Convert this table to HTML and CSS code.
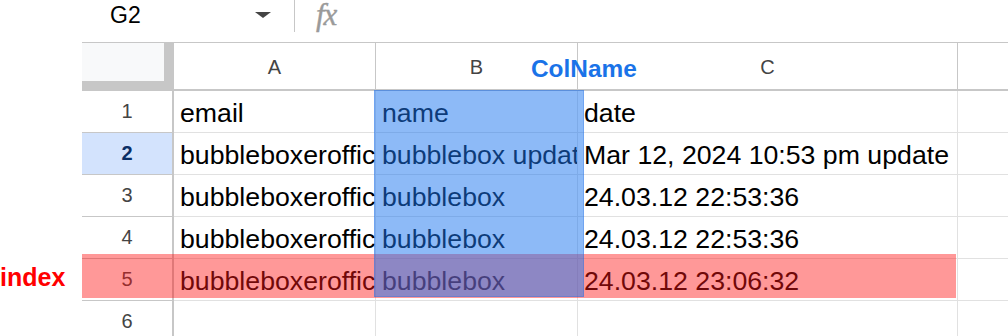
FILE: index.html
```html
<!DOCTYPE html>
<html lang="en">
<head>
<meta charset="utf-8">
<title>Sheet</title>
<link rel="stylesheet" href="styles.css">
</head>
<body>
<div class="page">
  <div class="topbar">
    <div class="namebox">G2</div>
    <span class="caret"></span>
    <span class="divider"></span>
    <span class="fx">fx</span>
  </div>

  <div class="sheet">
    <div class="corner"></div>
    <div class="colhead">A</div>
    <div class="colhead">B</div>
    <div class="colhead">C</div>
    <div class="colhead last"></div>

    <div class="rowhead">1</div>
    <div class="cell">email</div>
    <div class="cell">name</div>
    <div class="cell">date</div>
    <div class="cell last"></div>

    <div class="rowhead active">2</div>
    <div class="cell">bubbleboxeroffice@gmail.com</div>
    <div class="cell">bubblebox update</div>
    <div class="cell">Mar 12, 2024 10:53 pm update</div>
    <div class="cell last"></div>

    <div class="rowhead">3</div>
    <div class="cell">bubbleboxeroffice@gmail.com</div>
    <div class="cell">bubblebox</div>
    <div class="cell">24.03.12 22:53:36</div>
    <div class="cell last"></div>

    <div class="rowhead">4</div>
    <div class="cell">bubbleboxeroffice@gmail.com</div>
    <div class="cell">bubblebox</div>
    <div class="cell">24.03.12 22:53:36</div>
    <div class="cell last"></div>

    <div class="rowhead">5</div>
    <div class="cell">bubbleboxeroffice@gmail.com</div>
    <div class="cell">bubblebox</div>
    <div class="cell">24.03.12 23:06:32</div>
    <div class="cell last"></div>

    <div class="rowhead">6</div>
    <div class="cell"></div>
    <div class="cell"></div>
    <div class="cell"></div>
    <div class="cell last"></div>
  </div>

  <!-- highlight bands laid over the grid -->
  <div class="band band-row"></div>
  <div class="band band-col"></div>
  <div class="tag tag-col">ColName</div>
  <div class="tag tag-row">index</div>
</div>
</body>
</html>
```

FILE: styles.css
```css
* {
  box-sizing: border-box;
}

html, body {
  margin: 0;
  padding: 0;
  background: #fff;
}

body {
  font-family: "Liberation Sans", Arial, sans-serif;
  color: #000;
  overflow: hidden;
}

.page {
  position: relative;
  width: 1008px;
  height: 336px;
  overflow: hidden;
}

/* formula bar */
.topbar {
  display: flex;
  align-items: flex-start;
  height: 32px;
  padding-left: 110px;
  margin-bottom: 10px;
}

.namebox {
  width: 145px;
  font-size: 23px;
  line-height: 26px;
  margin-top: 2px;
  color: #000;
}

.caret {
  width: 0;
  height: 0;
  border-left: 8px solid transparent;
  border-right: 8px solid transparent;
  border-top: 6px solid #444;
  margin-top: 12px;
}

.divider {
  width: 1px;
  height: 32px;
  background: #c7c7c7;
  margin-left: 23px;
}

.fx {
  margin-left: 21px;
  font-family: "Liberation Serif", "Times New Roman", serif;
  font-style: italic;
  font-size: 31px;
  color: #9a9a9a;
  letter-spacing: -1px;
  line-height: 30px;
  -webkit-text-stroke: 0.4px #9a9a9a;
}

/* grid */
.sheet {
  margin-left: 82px;
  border-top: 1px solid #c7c7c7;
  display: grid;
  grid-template-columns: 92px 202px 202px 380px 1fr;
  grid-template-rows: 48px repeat(6, 42px);
}

.corner {
  background: #f8f9fa;
  border-right: 10px solid #c7c7c7;
  border-bottom: 10px solid #c7c7c7;
}

.colhead {
  display: flex;
  align-items: center;
  justify-content: center;
  font-size: 20px;
  color: #444;
  border-right: 1px solid #c7c7c7;
  border-bottom: 2px solid #c7c7c7;
  padding-top: 2px;
}

.rowhead {
  display: flex;
  align-items: center;
  justify-content: center;
  font-size: 20px;
  color: #444;
  border-right: 2px solid #c7c7c7;
  border-bottom: 1px solid #c7c7c7;
}

.rowhead.active {
  background: #d3e3fd;
  color: #0b2f66;
  font-weight: bold;
}

.cell {
  display: flex;
  align-items: center;
  padding-left: 6px;
  padding-top: 3px;
  font-size: 26.7px;
  white-space: nowrap;
  overflow: hidden;
  border-right: 1px solid #e1e1e1;
  border-bottom: 1px solid #e1e1e1;
}

.cell.last,
.colhead.last {
  border-right: none;
}

/* highlight bands */
.band {
  position: absolute;
}

.band-row {
  left: 82px;
  top: 254px;
  width: 874px;
  height: 44px;
  background: rgba(255, 20, 20, 0.44);
}

.band-col {
  left: 374px;
  top: 90px;
  width: 210px;
  height: 207px;
  background: rgba(28, 118, 240, 0.5);
  border: 1px solid rgba(28, 100, 220, 0.25);
}

.tag {
  position: absolute;
  font-weight: bold;
  white-space: nowrap;
}

.tag-col {
  left: 531px;
  top: 55px;
  font-size: 24.4px;
  color: #1a73e8;
}

.tag-row {
  left: 0;
  top: 263px;
  font-size: 25px;
  color: #ff0000;
}
```
